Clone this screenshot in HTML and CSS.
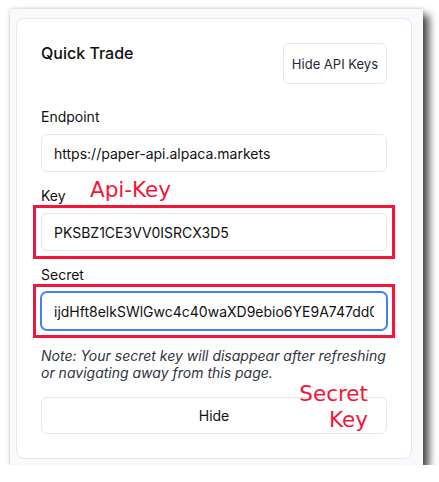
FILE: index.html
```html
<!DOCTYPE html>
<html lang="en">
<head>
<meta charset="utf-8">
<title>Quick Trade</title>
<link rel="stylesheet" href="styles.css">
</head>
<body>
<div class="frame">
  <div class="card">
    <div class="header">
      <h2 class="title">Quick Trade</h2>
      <button class="btn-small">Hide API Keys</button>
    </div>
    <div class="field first">
      <label class="label">Endpoint</label>
      <div class="input-wrap">
        <input class="input" type="text" value="https://paper-api.alpaca.markets">
      </div>
    </div>
    <div class="field">
      <label class="label">Key</label>
      <div class="input-wrap">
        <input class="input" type="text" value="PKSBZ1CE3VV0ISRCX3D5">
        <div class="mark"></div>
      </div>
    </div>
    <div class="field">
      <label class="label">Secret</label>
      <div class="input-wrap">
        <input class="input focused" type="text" value="ijdHft8elkSWlGwc4c40waXD9ebio6YE9A747dd0ab12">
        <div class="mark"></div>
      </div>
    </div>
    <p class="note">Note: Your secret key will disappear after refreshing or navigating away from this page.</p>
    <button class="btn-wide">Hide</button>
    <div class="anno anno-key">Api-Key</div>
    <div class="anno anno-secret">Secret<br>Key</div>
  </div>
</div>
</body>
</html>
```
FILE: styles.css
```css
html, body {
  margin: 0;
  padding: 0;
  background: #ffffff;
}
body {
  font-family: Inter, "Noto Sans", sans-serif;
  color: #111827;
}
.frame {
  box-sizing: border-box;
  margin: 9px 0 0 10px;
  width: 413px;
  height: 456px;
  padding: 9px 11px 6px 6px;
  background: #f7f9fc;
  box-shadow: 6px 6px 8px rgba(0, 0, 0, 0.7), 0 0 4px rgba(0, 0, 0, 0.2);
}
.card {
  position: relative;
  box-sizing: border-box;
  height: 441px;
  background: #ffffff;
  border: 1px solid #e5e7eb;
  border-radius: 8px;
  padding: 24px;
  display: flex;
  flex-direction: column;
}
.header {
  display: flex;
  justify-content: space-between;
  align-items: flex-start;
}
.title {
  margin: 0;
  font-size: 16px;
  line-height: 20px;
  font-weight: 500;
  color: #0f0f14;
}
.btn-small {
  box-sizing: border-box;
  height: 41px;
  padding: 0 8px;
  background: #ffffff;
  border: 1px solid #e5e7eb;
  border-radius: 6px;
  font-family: Inter, sans-serif;
  font-size: 13px;
  font-weight: 400;
  color: #1e293b;
}
.field {
  display: flex;
  flex-direction: column;
  margin-top: 14px;
}
.field.first {
  margin-top: 23px;
}
.label {
  font-size: 14px;
  line-height: 20px;
  font-weight: 400;
  color: #111111;
  margin-bottom: 7px;
}
.input-wrap {
  position: relative;
}
.input {
  box-sizing: border-box;
  display: block;
  width: 100%;
  height: 38px;
  padding: 0 12px;
  border: 1px solid #e5e7eb;
  border-radius: 6px;
  background: #ffffff;
  font-family: Inter, sans-serif;
  font-size: 14px;
  color: #111111;
  outline: none;
}
.input.focused {
  border-color: #3b82f6;
  box-shadow: 0 0 0 1px #3b82f6;
}
.mark {
  position: absolute;
  top: -8px;
  left: -8px;
  right: -8px;
  bottom: -8px;
  border: 3px solid #f5153a;
  pointer-events: none;
}
.note {
  margin: 17px 0 0 0;
  font-size: 14px;
  line-height: 17px;
  font-style: italic;
  color: #2f3440;
}
.btn-wide {
  box-sizing: border-box;
  margin-top: 16px;
  height: 39px;
  width: 100%;
  background: #ffffff;
  border: 1px solid #e5e7eb;
  border-radius: 6px;
  font-family: Inter, sans-serif;
  font-size: 14px;
  font-weight: 400;
  color: #111111;
}
.anno {
  position: absolute;
  font-family: "DejaVu Sans", sans-serif;
  font-size: 21.5px;
  color: #f5153a;
}
.anno-key {
  left: 73px;
  top: 160px;
  line-height: 21px;
}
.anno-secret {
  right: 43px;
  top: 362px;
  line-height: 26px;
  text-align: right;
}
```
